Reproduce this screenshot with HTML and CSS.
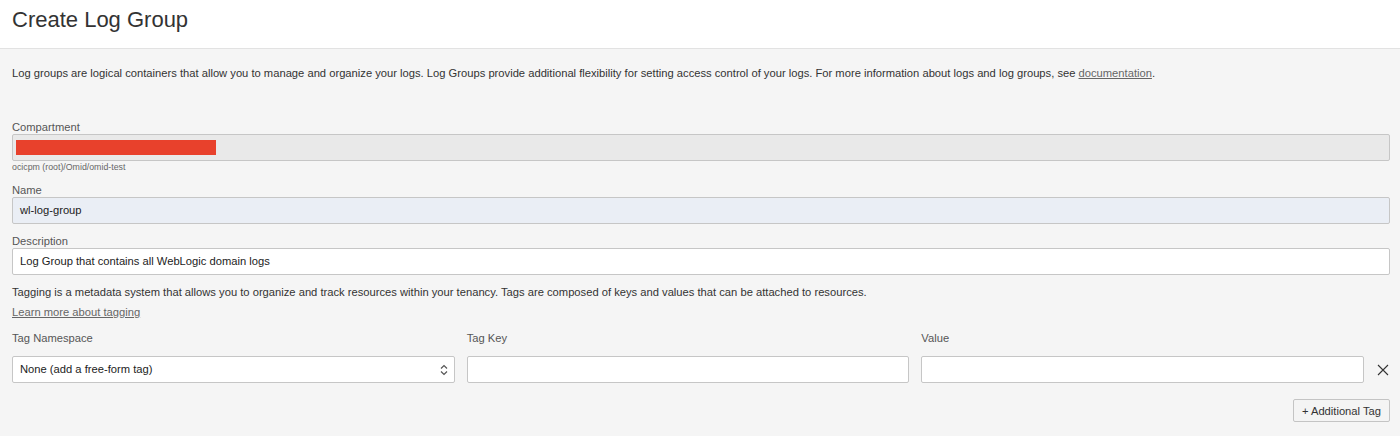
FILE: index.html
```html
<!DOCTYPE html>
<html>
<head>
<meta charset="utf-8">
<link rel="stylesheet" href="styles.css">
</head>
<body>
<header class="head">
  <h1 class="title">Create Log Group</h1>
</header>
<main class="content">
  <p class="intro">Log groups are logical containers that allow you to manage and organize your logs. Log Groups provide additional flexibility for setting access control of your logs. For more information about logs and log groups, see <a class="link" href="#">documentation</a>.</p>

  <div class="field first">
    <div class="label">Compartment</div>
    <div class="box disabled"><span class="redact"></span></div>
    <div class="hint">ocicpm (root)/Omid/omid-test</div>
  </div>

  <div class="field">
    <div class="label">Name</div>
    <div class="box filled">wl-log-group</div>
  </div>

  <div class="field">
    <div class="label">Description</div>
    <div class="box">Log Group that contains all WebLogic domain logs</div>
  </div>

  <p class="tagging">Tagging is a metadata system that allows you to organize and track resources within your tenancy. Tags are composed of keys and values that can be attached to resources.</p>
  <a class="link learn" href="#">Learn more about tagging</a>

  <div class="tags">
    <div class="tlabel">Tag Namespace</div>
    <div class="tlabel">Tag Key</div>
    <div class="tlabel">Value</div>
    <div></div>
    <div class="box select">None (add a free-form tag)
      <svg class="arrows" width="8" height="12" viewBox="0 0 8 12"><path d="M1 4.5 L4 1.5 L7 4.5 M1 7.5 L4 10.5 L7 7.5" fill="none" stroke="#555" stroke-width="1.2"/></svg>
    </div>
    <div class="box"></div>
    <div class="box"></div>
    <div class="close"><svg width="12" height="12" viewBox="0 0 12 12"><path d="M1 1 L11 11 M11 1 L1 11" stroke="#333" stroke-width="1.1"/></svg></div>
  </div>

  <div class="actions">
    <button class="btn">+ Additional Tag</button>
  </div>
</main>
</body>
</html>
```
FILE: styles.css
```css
html, body {
  margin: 0;
  padding: 0;
}
body {
  background: #f5f5f5;
  font-family: "Liberation Sans", Arial, sans-serif;
  color: #333;
  height: 436px;
  overflow: hidden;
}
.head {
  background: #fff;
  height: 48px;
  border-bottom: 1px solid #e2e2e2;
  padding: 0 12px;
}
.title {
  margin: 0;
  font-weight: normal;
  font-size: 22px;
  line-height: 40px;
  color: #333;
}
.content {
  padding: 0 10px 0 12px;
}
.intro {
  margin: 16px 0 0;
  font-size: 11.2px;
  line-height: 16px;
  color: #333;
}
.link {
  color: #666;
  text-decoration: underline;
}
.field {
  margin-top: 10px;
}
.field.first {
  margin-top: 39px;
}
.label {
  font-size: 11.2px;
  line-height: 14px;
  color: #555;
}
.box {
  box-sizing: border-box;
  height: 27px;
  border: 1px solid #c6c6c6;
  border-radius: 2px;
  background: #fff;
  font-size: 11.2px;
  line-height: 25px;
  padding: 0 7px;
  color: #222;
}
.disabled {
  background: #e9e9e9;
  padding: 0 3px;
  display: flex;
  align-items: center;
}
.redact {
  display: block;
  width: 200px;
  height: 15px;
  background: #e8412c;
}
.filled {
  background: #eaeef5;
}
.hint {
  font-size: 8.8px;
  line-height: 12px;
  color: #666;
}
.tagging {
  margin: 9px 0 0;
  font-size: 11.2px;
  line-height: 16px;
}
.learn {
  display: block;
  margin-top: 4px;
  font-size: 11.2px;
  line-height: 16px;
}
.tags {
  margin-top: 10px;
  display: grid;
  grid-template-columns: 1fr 1fr 1fr 14px;
  column-gap: 12px;
  row-gap: 10px;
}
.tlabel {
  font-size: 11.2px;
  line-height: 16px;
  color: #555;
}
.select {
  display: flex;
  align-items: center;
  justify-content: space-between;
  padding-right: 6px;
}
.close {
  display: flex;
  align-items: center;
  justify-content: center;
}
.actions {
  margin-top: 16px;
  display: flex;
  justify-content: flex-end;
}
.btn {
  box-sizing: border-box;
  height: 23px;
  padding: 0 8px;
  border: 1px solid #c4c4c4;
  border-radius: 2px;
  background: #f4f4f4;
  font-family: "Liberation Sans", Arial, sans-serif;
  font-size: 11.2px;
  color: #333;
}
```
